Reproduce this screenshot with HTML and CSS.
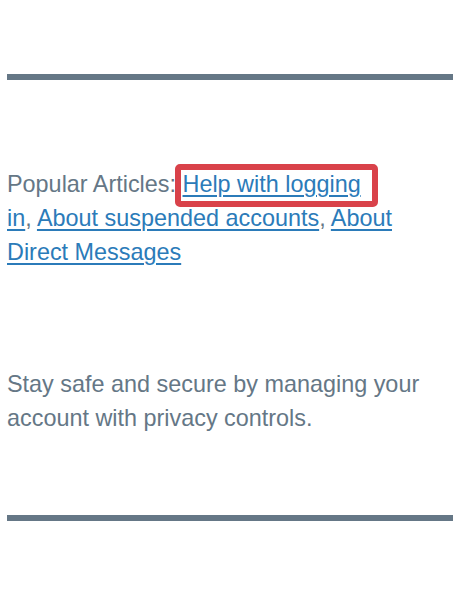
FILE: index.html
```html
<!DOCTYPE html>
<html lang="en">
<head>
  <meta charset="UTF-8" />
  <meta name="viewport" content="width=device-width, initial-scale=1.0"/>
  <title>Help Center</title>
  <link rel="stylesheet" href="styles.css">
</head>
<body>
  <hr class="rule rule-top">

  <p class="articles">
    Popular Articles: <a href="#"><span class="mark">Help with logging</span><br>in</a>, <a href="#">About suspended accounts</a>, <a href="#">About Direct Messages</a>
  </p>

  <p class="tip">Stay safe and secure by managing your account with privacy controls.</p>

  <hr class="rule rule-bottom">
</body>
</html>
```

FILE: styles.css
```css
body {
  margin: 0;
  padding: 0 4px 0 7px;
  background-color: #fff;
  color: #657786;
  font-family: "Liberation Sans", Arial, sans-serif;
  font-size: 23.4px;
  line-height: 34px;
}

.rule {
  border: none;
  height: 6px;
  background: #657786;
  margin: 0;
}

.rule-top {
  margin-top: 74px;
}

.rule-bottom {
  margin-top: 80px;
}

.articles {
  margin: 87px 0 0;
  padding-right: 30px;
}

.articles a {
  color: #2b7bb9;
  text-decoration: underline;
  text-underline-offset: 3px;
  text-decoration-thickness: 2px;
}

.mark {
  position: relative;
}

.mark::after {
  content: "";
  position: absolute;
  left: -8px;
  right: -17px;
  top: -7px;
  bottom: -10px;
  border: 6px solid #d9424a;
  border-radius: 5px;
}

.tip {
  margin: 98px 0 0;
}
```
